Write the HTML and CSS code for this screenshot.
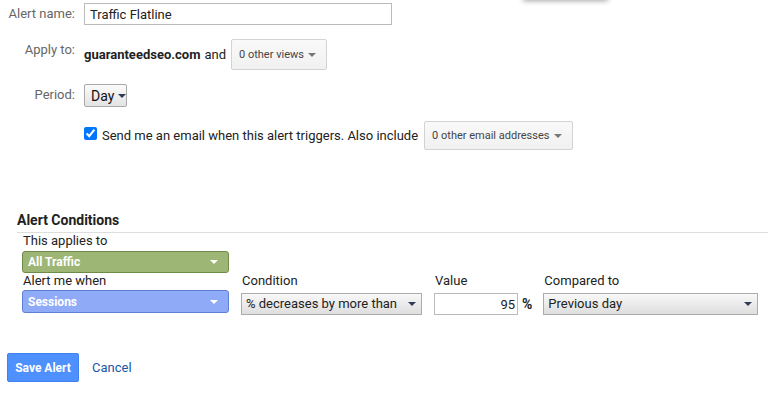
FILE: index.html
```html
<!DOCTYPE html>
<html lang="en">
<head>
    <meta charset="UTF-8">
    <meta name="viewport" content="width=device-width, initial-scale=1.0">
    <title>Create Alert</title>
    <link rel="stylesheet" href="styles.css">
</head>
<body>

<div class="menu-shadow"></div>

<div class="alert-form">
    <div class="row">
        <label class="lbl" for="alertName">Alert name:</label>
        <input class="name-input" id="alertName" type="text" value="Traffic Flatline">
    </div>

    <div class="row row-top">
        <span class="lbl">Apply to:</span>
        <div class="field">
            <b>guaranteedseo.com</b> and
            <span class="gbtn views-btn">0 other views <i class="caret"></i></span>
        </div>
    </div>

    <div class="row row-top">
        <span class="lbl">Period:</span>
        <span class="day-btn">Day <i class="caret caret-dark"></i></span>
    </div>

    <div class="row">
        <span class="lbl"></span>
        <div class="field">
            <input type="checkbox" class="chk" checked>
            <span class="chk-text">Send me an email when this alert triggers. Also include</span>
            <span class="gbtn email-btn">0 other email addresses <i class="caret"></i></span>
        </div>
    </div>
</div>

<div class="conditions">
    <h3 class="cond-title">Alert Conditions</h3>

    <div class="cond-body">
        <div class="cond-label">This applies to</div>
        <div class="seg seg-green">All Traffic <i class="caret caret-white"></i></div>

        <div class="cond-row">
            <div class="col col-metric">
                <div class="cond-label">Alert me when</div>
                <div class="seg seg-blue">Sessions <i class="caret caret-white"></i></div>
            </div>
            <div class="col col-cond">
                <div class="cond-label">Condition</div>
                <div class="sel">% decreases by more than <i class="caret caret-dark"></i></div>
            </div>
            <div class="col col-value">
                <div class="cond-label">Value</div>
                <div class="value-wrap">
                    <input class="value-input" type="text" value="95">
                    <span class="pct">%</span>
                </div>
            </div>
            <div class="col col-compare">
                <div class="cond-label">Compared to</div>
                <div class="sel">Previous day <i class="caret caret-dark"></i></div>
            </div>
        </div>
    </div>
</div>

<div class="actions">
    <button type="button" class="save-btn">Save Alert</button>
    <a href="#" class="cancel">Cancel</a>
</div>

</body>
</html>
```

FILE: styles.css
```css
body {
    font-family: Roboto, Arial, sans-serif;
    font-size: 13px;
    line-height: 16px;
    color: #222;
    background-color: #fff;
    margin: 0;
    padding: 3px 0 0 0;
    position: relative;
    overflow: hidden;
    height: 390px;
    white-space: nowrap;
}
.menu-shadow {
    position: absolute;
    top: -40px;
    left: 523px;
    width: 85px;
    height: 40px;
    background-color: #fff;
    box-shadow: 0 1px 5px rgba(0, 0, 0, 0.35);
}
.row {
    display: flex;
    align-items: center;
    margin-bottom: 14px;
}
.row-top {
    align-items: flex-start;
}
.row-top .lbl {
    padding-top: 3px;
}
.lbl {
    width: 75px;
    padding-right: 9px;
    text-align: right;
    color: #666;
    flex-shrink: 0;
}
.name-input {
    width: 308px;
    height: 22px;
    box-sizing: border-box;
    border: 1px solid #bbb;
    padding: 0 5px;
    font-family: Roboto, Arial, sans-serif;
    font-size: 13px;
    color: #222;
    margin: 0;
}
.field {
    display: flex;
    align-items: center;
}
.field b {
    margin-right: 4px;
}
.gbtn {
    display: inline-flex;
    align-items: center;
    justify-content: space-between;
    box-sizing: border-box;
    background: linear-gradient(#f9f9f9, #f1f1f1);
    border: 1px solid #d3d3d3;
    border-radius: 2px;
    font-size: 11px;
    color: #444;
    padding: 0 10px 0 7px;
}
.views-btn {
    width: 96px;
    height: 31px;
    margin-left: 5px;
}
.email-btn {
    width: 149px;
    height: 29px;
    margin-left: 6px;
}
.caret {
    display: inline-block;
    width: 0;
    height: 0;
    border-left: 4px solid transparent;
    border-right: 4px solid transparent;
    border-top: 4px solid #777;
}
.caret-dark {
    border-top-color: #333a55;
}
.caret-white {
    border-top-color: #fff;
}
.day-btn {
    display: inline-flex;
    align-items: center;
    gap: 4px;
    box-sizing: border-box;
    height: 23px;
    width: 43px;
    padding: 0 5px 0 6px;
    border: 1px solid #a9a9a9;
    border-radius: 2px;
    background: linear-gradient(#fbfbfb, #e3e3e3);
    color: #111;
    font-size: 14px;
}
.chk {
    width: 13px;
    height: 13px;
    margin: -5px 5px 0 0;
    accent-color: #0075ff;
}
.chk-text {
    color: #222;
}
.conditions {
    margin-top: 62px;
}
.cond-title {
    font-size: 14px;
    font-weight: bold;
    line-height: 16px;
    margin: 0 0 0 17px;
    padding-bottom: 4px;
    border-bottom: 1px solid #ddd;
}
.cond-body {
    padding-left: 22px;
}
.cond-label {
    padding-left: 1px;
    color: #222;
}
.seg {
    display: flex;
    align-items: center;
    justify-content: space-between;
    box-sizing: border-box;
    width: 207px;
    border-radius: 3px;
    color: #fff;
    font-size: 12px;
    font-weight: bold;
    padding: 0 10px 0 5px;
}
.seg-green {
    height: 22px;
    margin-top: 2px;
    background-color: #9db675;
    border: 1px solid #6f8b4a;
}
.seg-blue {
    height: 23px;
    margin-top: 1px;
    background-color: #8fabf7;
    border: 1px solid #5f7fd4;
}
.cond-row {
    display: flex;
}
.col-cond {
    margin-left: 12px;
}
.col-value {
    margin-left: 12px;
}
.col-compare {
    margin-left: 11px;
}
.sel {
    display: flex;
    align-items: center;
    justify-content: space-between;
    box-sizing: border-box;
    height: 22px;
    margin-top: 4px;
    padding: 0 5px 0 4px;
    border: 1px solid #acacac;
    background: linear-gradient(#f8f8f8, #dedede);
    color: #222;
}
.col-cond .sel {
    width: 181px;
}
.col-compare .sel {
    width: 215px;
}
.value-wrap {
    display: flex;
    align-items: center;
    margin-top: 4px;
}
.value-input {
    width: 84px;
    height: 22px;
    box-sizing: border-box;
    border: 1px solid #bbb;
    margin: 0;
    padding: 0 2px 0 0;
    text-align: right;
    font-family: Roboto, Arial, sans-serif;
    font-size: 13px;
    color: #222;
}
.pct {
    font-weight: bold;
    font-size: 14px;
    margin-left: 4px;
}
.actions {
    display: flex;
    align-items: center;
    margin: 38px 0 0 7px;
}
.save-btn {
    height: 29px;
    width: 72px;
    border: 1px solid #3f82f0;
    border-radius: 2px;
    background-color: #4d90fe;
    color: #fff;
    font-family: Roboto, Arial, sans-serif;
    font-size: 12px;
    font-weight: bold;
    padding: 0;
    cursor: pointer;
}
.cancel {
    margin: 1px 0 0 13px;
    color: #1a55a8;
    text-decoration: none;
    font-size: 13px;
}
```
